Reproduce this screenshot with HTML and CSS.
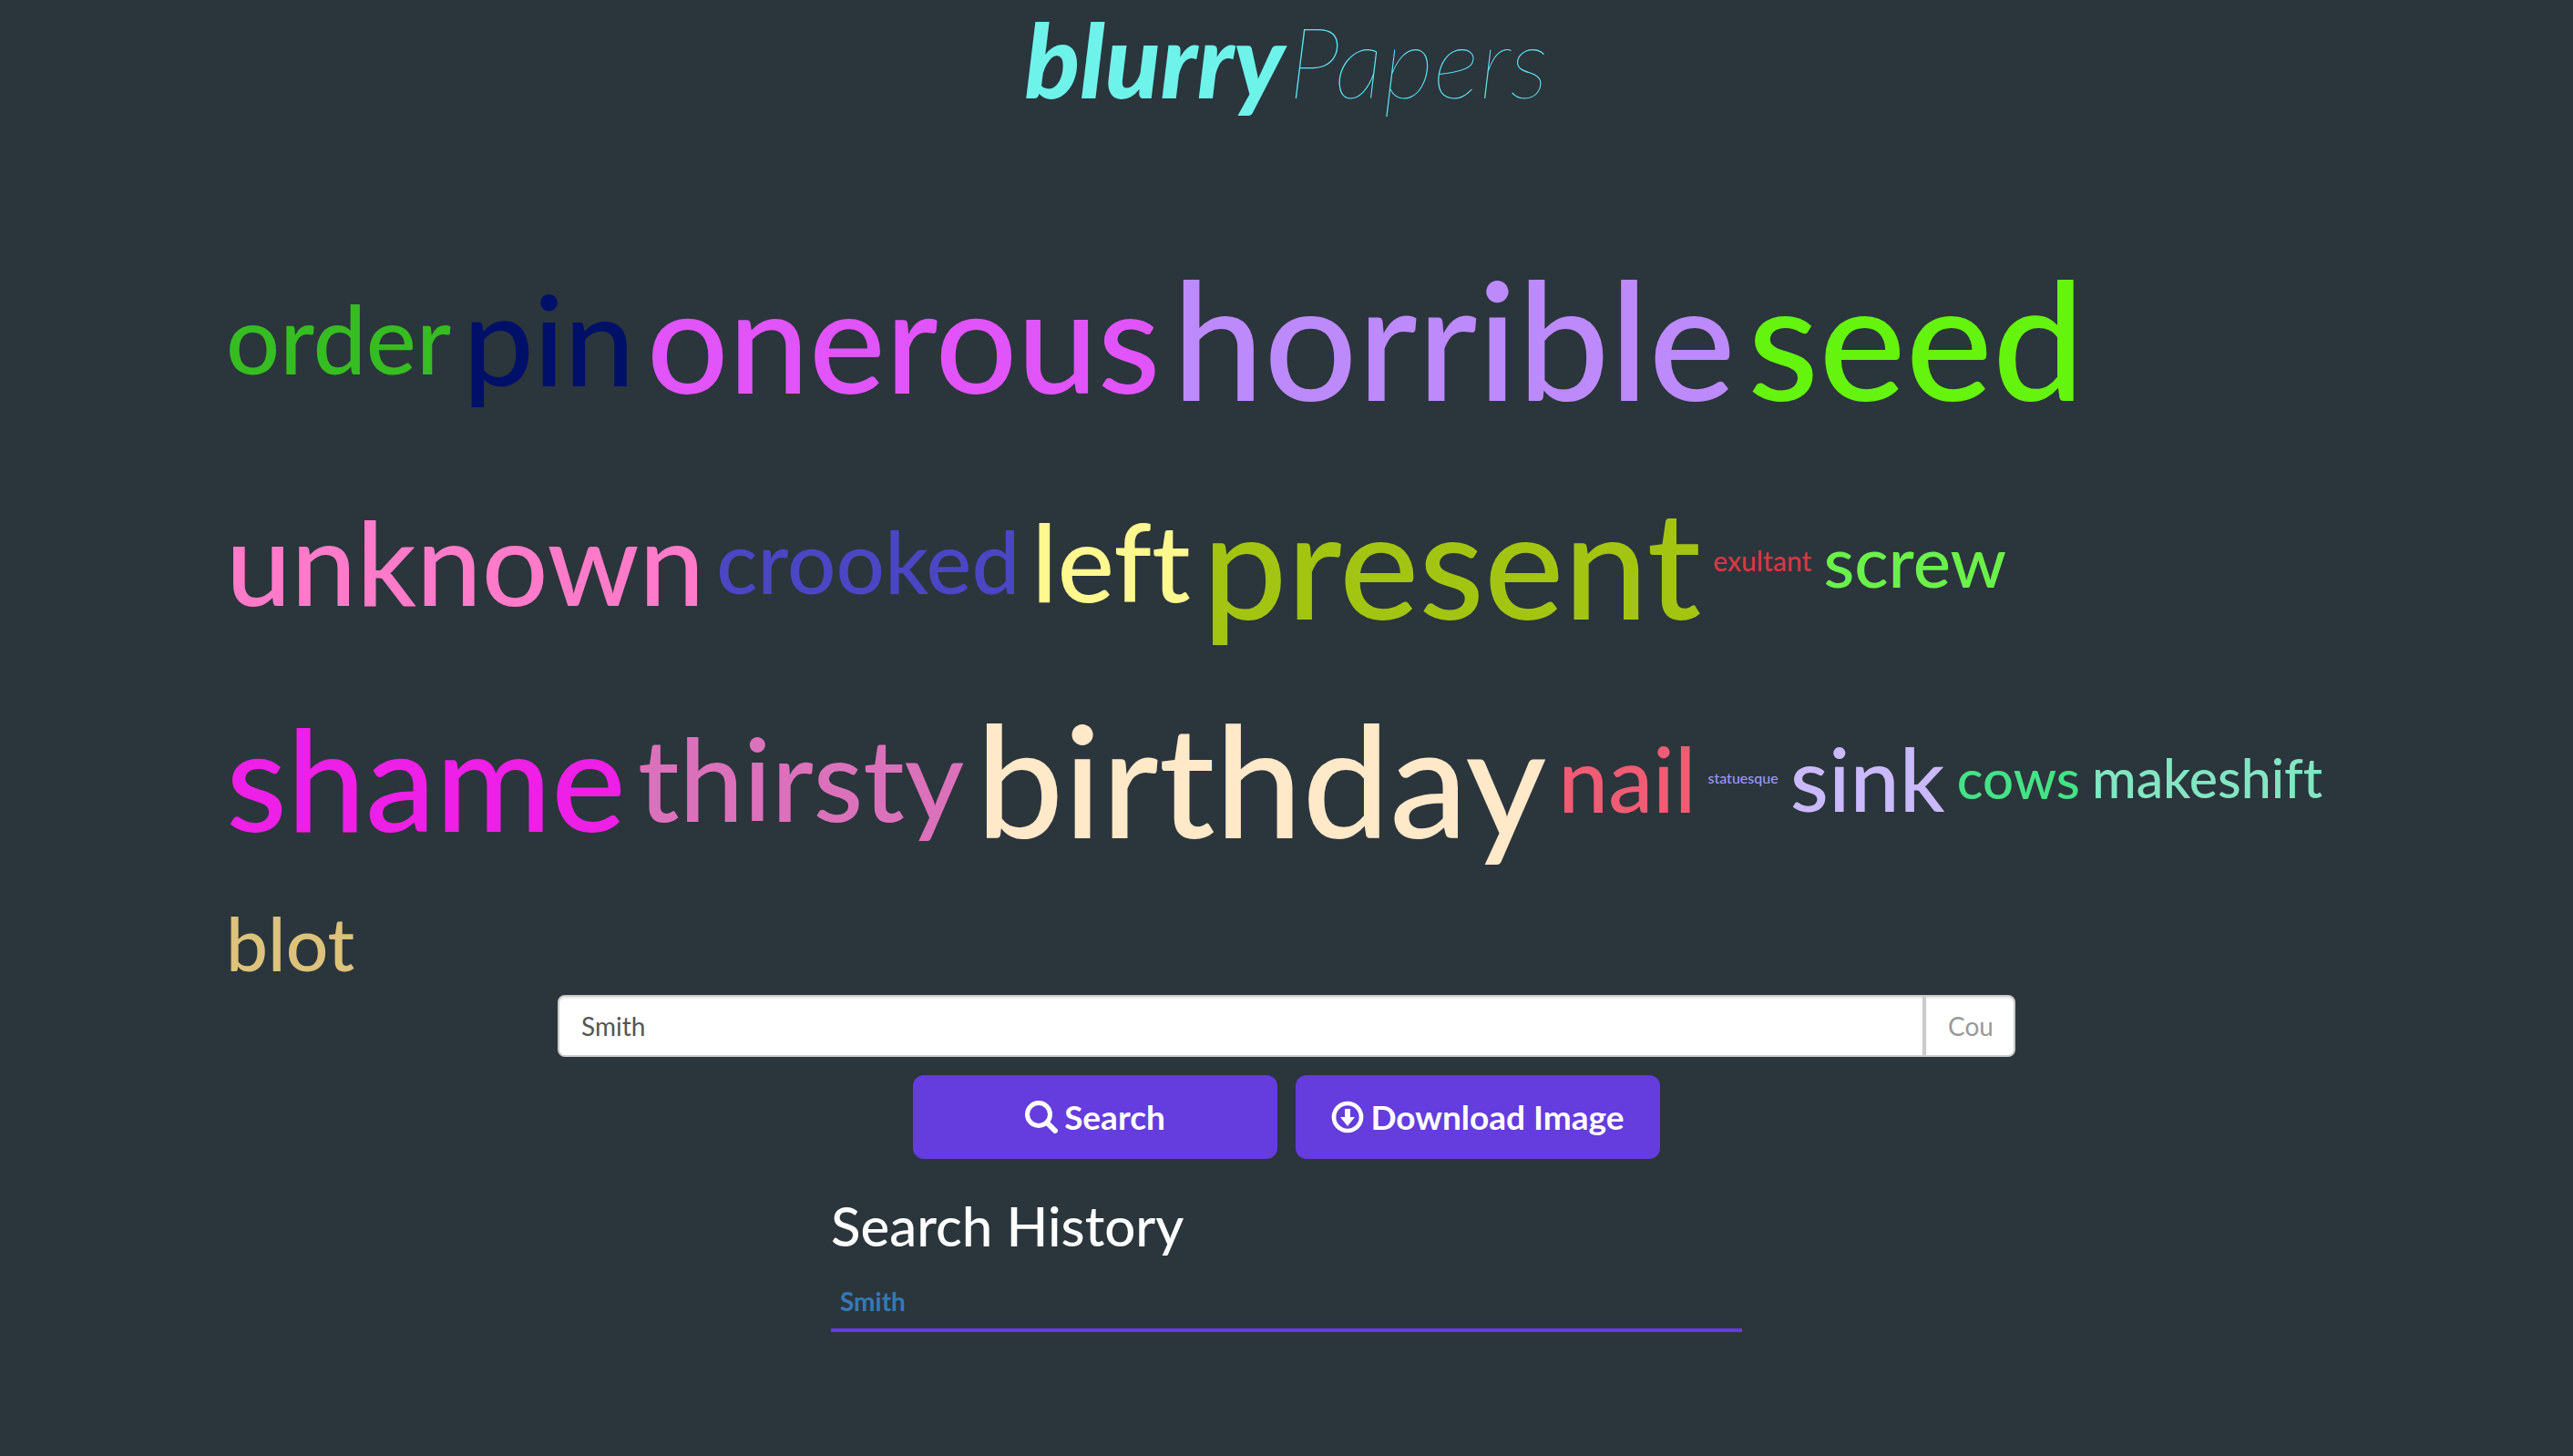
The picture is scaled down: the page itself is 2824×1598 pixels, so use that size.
FILE: index.html
```html
<!DOCTYPE html>
<html lang="en">
<head>
<meta charset="utf-8">
<title>blurryPapers</title>
<link rel="stylesheet" href="styles.css">
</head>
<body>
<header class="brand"><h1 class="logo"><span class="logo-bold">blurry</span><span class="logo-thin">Papers</span></h1></header>
<main>
<section class="cloud" aria-label="Word cloud">
<span class="word" style="font-size:104px;color:#36bd21">order</span>
<span class="word" style="font-size:138px;color:#001068">pin</span>
<span class="word" style="font-size:158px;color:#e154f9">onerous</span>
<span class="word" style="font-size:180px;color:#bd8afc">horrible</span>
<span class="word" style="font-size:180px;color:#65f40d">seed</span>
<span class="word" style="font-size:128px;color:#ff7bc9">unknown</span>
<span class="word" style="font-size:94px;color:#4b46c3">crooked</span>
<span class="word" style="font-size:118px;color:#fef88f">left</span>
<span class="word" style="font-size:165px;color:#a3c512">present</span>
<span class="word" style="font-size:30px;color:#d83745">exultant</span>
<span class="word" style="font-size:78px;color:#6bf14a">screw</span>
<span class="word" style="font-size:154px;color:#ee1fe6">shame</span>
<span class="word" style="font-size:126px;color:#dc71bb">thirsty</span>
<span class="word" style="font-size:171px;color:#ffe9c9">birthday</span>
<span class="word" style="font-size:98px;color:#f05c74">nail</span>
<span class="word" style="font-size:16px;color:#9a98fb">statuesque</span>
<span class="word" style="font-size:97px;color:#cabafb">sink</span>
<span class="word" style="font-size:60px;color:#45e286">cows</span>
<span class="word" style="font-size:59px;color:#83e6c2">makeshift</span>
<span class="word" style="font-size:82px;color:#dcc27a">blot</span>
</section>
<form class="search">
<div class="fields">
<input class="field field-name" type="text" value="Smith" aria-label="Author name">
<input class="field field-count" type="text" placeholder="Count" aria-label="Count">
</div>
<div class="actions">
<button class="action" type="button"><svg class="icon" viewBox="0 0 36 36" aria-hidden="true"><circle cx="15" cy="15" r="12.5" fill="none" stroke="currentColor" stroke-width="5"/><path d="M25 25L33 33" fill="none" stroke="currentColor" stroke-width="6" stroke-linecap="round"/></svg><span>Search</span></button>
<button class="action" type="button"><svg class="icon" viewBox="0 0 36 36" aria-hidden="true"><circle cx="18" cy="18" r="15" fill="none" stroke="currentColor" stroke-width="4.7"/><path d="M15 9h6v9h5L18 28L10 18h5z" fill="currentColor"/></svg><span>Download Image</span></button>
</div>
</form>
<section class="history">
<h2 class="history-title">Search History</h2>
<ul class="history-list"><li class="history-item"><a class="history-link" href="#">Smith</a></li></ul>
</section>
</main>
</body>
</html>
```
FILE: styles.css
```css
* { box-sizing: border-box; }
body {
  margin: 0;
  background: #2b353c;
  color: #fff;
  font-family: Lato, "Liberation Sans", sans-serif;
  font-size: 28px;
  line-height: 40px;
}
.brand { padding-bottom: 112px; text-align: center; }
.logo {
  margin: 0;
  font-size: 112px;
  line-height: 130px;
  font-style: italic;
}
.logo-bold { color: #6ef3eb; font-weight: 900; }
.logo-thin {
  padding-left: 4px;
  color: #5ee4f4;
  font-size: 109px;
  font-weight: 100;
}
.cloud {
  max-width: 2340px;
  margin: 0 auto;
  padding-left: 3px;
  font-weight: 500;
  font-variant-ligatures: none;
}
.word {
  display: inline-block;
  padding: 0 3px;
  line-height: 1.42;
  vertical-align: middle;
}
.fields {
  display: flex;
  max-width: 1600px;
  margin: 0 auto 20px;
}
.field {
  height: 68px;
  min-width: 0;
  padding: 12px 24px;
  border: 2px solid #ccc;
  background: #fff;
  color: #555;
  font: inherit;
  box-shadow: inset 0 2px 2px rgba(0, 0, 0, 0.075);
}
.field::placeholder { color: #999; opacity: 1; }
.field-name { flex: 1; border-radius: 8px 0 0 8px; }
.field-count { width: 100px; border-radius: 0 8px 8px 0; }
.actions {
  display: flex;
  justify-content: center;
  gap: 20px;
}
.action {
  display: flex;
  align-items: center;
  justify-content: center;
  gap: 7px;
  width: 400px;
  height: 92px;
  padding: 0;
  border: 0;
  border-radius: 12px;
  background: #653cde;
  color: #fff;
  font: inherit;
  font-size: 37px;
  font-weight: 700;
}
.icon { width: 36px; height: 36px; }
.history {
  max-width: 1000px;
  margin: 0 auto;
  padding-top: 40px;
}
.history-title {
  margin: 0 0 20px;
  font-size: 60px;
  font-weight: 500;
  line-height: 66px;
}
.history-list {
  margin: 0;
  padding: 0;
  list-style: none;
}
.history-item {
  padding: 10px;
  border-bottom: 4px solid #653cde;
}
.history-link {
  color: #337ab7;
  font-weight: 700;
  text-decoration: none;
}
```
